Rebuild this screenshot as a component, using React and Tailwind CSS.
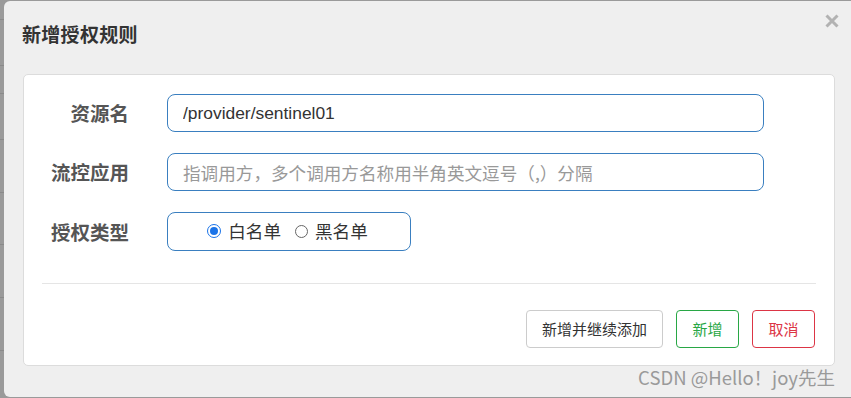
export default function App() {
  const cjk = { fontFamily: '"Noto Sans CJK SC", "Liberation Sans", sans-serif' };
  const rowLines = [19, 65, 93, 139, 192, 244, 297, 350];

  return (
    <div className="w-[851px] h-[398px] bg-[#9a9a9a] flex overflow-hidden" style={cjk}>
      {/* backdrop strip */}
      <div className="w-[4px] relative">
        {rowLines.map((y) => (
          <div key={y} className="absolute left-0 w-[4px] h-px bg-[#8a8a8a]" style={{ top: y }} />
        ))}
      </div>

      <div className="flex-1 mt-px mb-px bg-[#efefef] rounded-l-[6px] pl-[19px] pr-[16px] relative">
        <div className="h-[73px] pt-[19px] -ml-px">
          <h2 className="text-[19px] leading-[28px] font-bold text-[#333] tracking-[0.3px]">新增授权规则</h2>
        </div>
        <button className="absolute right-[12px] top-[13px] leading-none">
          <svg width="14" height="14" viewBox="0 0 14 14">
            <path d="M1.5 1.5 L12.5 12.5 M12.5 1.5 L1.5 12.5" stroke="#b2b2b2" strokeWidth="3" />
          </svg>
        </button>

        <div className="bg-white border border-[#dcdcdc] rounded-[5px] h-[292px] pt-[19px] px-[18px]">
          <div className="flex flex-col gap-[21px]">
            <div className="flex items-center">
              <label className="w-[87px] text-right text-[19.5px] font-bold text-[#555] leading-[28px]">资源名</label>
              <input
                className="ml-[38px] w-[597px] h-[38px] border border-[#3a7fc0] rounded-[8px] px-[15px] text-[17.4px] text-[#333] outline-none"
                style={{ fontFamily: '"Liberation Sans", Arial, sans-serif' }}
                defaultValue="/provider/sentinel01"
              />
            </div>
            <div className="flex items-center">
              <label className="w-[87px] text-right text-[19.5px] font-bold text-[#555] leading-[28px]">流控应用</label>
              <input
                className="ml-[38px] w-[597px] h-[38px] border border-[#3a7fc0] rounded-[8px] px-[15px] text-[17.6px] text-[#333] placeholder:text-[#999] outline-none"
                placeholder="指调用方，多个调用方名称用半角英文逗号（,）分隔"
              />
            </div>
            <div className="flex items-center">
              <label className="w-[87px] text-right text-[19.5px] font-bold text-[#555] leading-[28px]">授权类型</label>
              <div className="ml-[38px] w-[244px] h-[39px] border border-[#3a7fc0] rounded-[8px] flex items-center justify-center gap-[14px] text-[17.6px] text-[#333] pr-[3px]">
                <span className="flex items-center gap-[7px]">
                  <span className="w-[14px] h-[14px] rounded-full border border-[#1a73e8] bg-white flex items-center justify-center">
                    <span className="w-[8px] h-[8px] rounded-full bg-[#1a73e8]" />
                  </span>
                  白名单
                </span>
                <span className="flex items-center gap-[7px]">
                  <span className="w-[13px] h-[13px] rounded-full border border-[#666] bg-white" />
                  黑名单
                </span>
              </div>
            </div>
          </div>

          <div className="h-px bg-[#e5e5e5] mt-[32px]" />

          <div className="flex justify-end gap-[13px] mt-[26px] mr-px text-[15px]">
            <button className="h-[38px] w-[137px] border border-[#cccccc] rounded-[4px] text-[#333] bg-white">新增并继续添加</button>
            <button className="h-[38px] w-[63px] border border-[#28a745] rounded-[4px] text-[#28a745] bg-white">新增</button>
            <button className="h-[38px] w-[63px] border border-[#dc3545] rounded-[4px] text-[#dc3545] bg-white">取消</button>
          </div>
        </div>

        <div className="text-right text-[18.5px] text-[#9a9a9a] leading-[24px] -mt-px">
          CSDN @Hello！joy先生
        </div>
      </div>
    </div>
  );
}
